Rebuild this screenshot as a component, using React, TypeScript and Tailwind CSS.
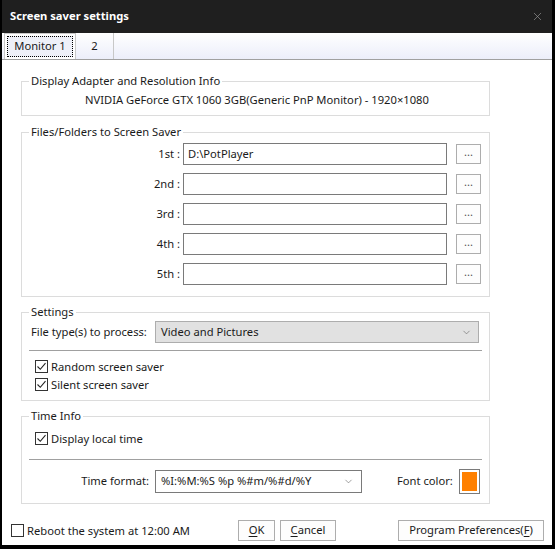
import { ChevronDown, X } from "lucide-react";

const FONT = "font-['Noto_Sans','Liberation_Sans',sans-serif]";
const TXT = "text-[11.2px] text-[#1a1a1a]";

function Check({ on }: { on: boolean }) {
  return (
    <span className="flex h-[13px] w-[13px] shrink-0 items-center justify-center border border-[#333] bg-white">
      {on && (
        <svg width="11" height="11" viewBox="0 0 11 11">
          <path d="M1.5 5.5 L4.3 8.3 L9.5 2.2" fill="none" stroke="#222" strokeWidth="1.1" />
        </svg>
      )}
    </span>
  );
}

function Group({ title, className, children }: { title: string; className: string; children: React.ReactNode }) {
  return (
    <fieldset className={`ml-[19px] w-[469px] border border-[#dcdcdc] ${className}`}>
      <legend className={`ml-[7px] px-[2px] leading-[16px] ${TXT}`}>{title}</legend>
      {children}
    </fieldset>
  );
}

const SLOTS = [
  { label: "1st :", value: "D:\\PotPlayer" },
  { label: "2nd :", value: "" },
  { label: "3rd :", value: "" },
  { label: "4th :", value: "" },
  { label: "5th :", value: "" },
];

function Btn({ children, className }: { children: React.ReactNode; className: string }) {
  return (
    <button className={`flex h-[21px] items-center justify-center border border-[#adadad] bg-[#fdfdfd] ${TXT} ${className}`}>
      {children}
    </button>
  );
}

export default function App() {
  return (
    <div className={`flex h-[549px] w-[555px] flex-col bg-black pb-[4px] pl-[2px] pr-[3px] ${FONT}`}>
      {/* title bar */}
      <div className="flex h-[33px] items-center justify-between bg-[#1f1f1f] pl-[8px] pr-[8px]">
        <span className="text-[11.2px] font-bold text-white">Screen saver settings</span>
        <X size={13} strokeWidth={1.2} className="text-[#9a9a9a]" />
      </div>

      <div className="flex flex-1 flex-col bg-white">
        {/* tabs */}
        <div className="flex h-[27px] border-b border-[#a0a0a0] bg-gradient-to-b from-white to-[#eceefa]">
          <div className="ml-[2px] flex w-[72px] items-stretch border-x border-t border-[#c8c8c8] bg-white p-[2px]">
            <div className={`flex flex-1 items-center justify-center border border-dotted border-black bg-[#eef0f8] ${TXT}`}>
              Monitor 1
            </div>
          </div>
          <div className={`flex w-[38px] items-center justify-center border-r border-[#c8c8c8] ${TXT}`}>
            2
          </div>
        </div>

        <Group title="Display Adapter and Resolution Info" className="mt-[13px] h-[43px]">
          <div className={`pl-[63px] pt-[2px] leading-[18px] ${TXT}`}>
            NVIDIA GeForce GTX 1060 3GB(Generic PnP Monitor) - 1920×1080
          </div>
        </Group>

        <Group title="Files/Folders to Screen Saver" className="mt-[8px] h-[173px]">
          <div className="flex flex-col gap-[8px] pt-[3px]">
            {SLOTS.map((s) => (
              <div key={s.label} className="flex items-center">
                <span className={`w-[158px] text-right ${TXT}`}>{s.label}</span>
                <div className={`ml-[3px] flex h-[22px] w-[264px] items-center border border-[#7a7a7a] px-[4px] ${TXT}`}>
                  {s.value}
                </div>
                <Btn className="ml-[9px] !h-[20px] w-[25px] pb-[4px] !text-[#555]">...</Btn>
              </div>
            ))}
          </div>
        </Group>

        <Group title="Settings" className="mt-[7px] h-[97px]">
          <div className="flex items-center pl-[9px] pt-[1px]">
            <span className={TXT}>File type(s) to process:</span>
            <div className={`ml-auto mr-[10px] flex h-[22px] w-[324px] items-center justify-between border border-[#adadad] bg-[#e1e1e1] pl-[5px] pr-[6px] ${TXT}`}>
              Video and Pictures
              <ChevronDown size={11} strokeWidth={1.2} className="text-[#555]" />
            </div>
          </div>
          <div className="mx-[7px] mt-[7px] h-px bg-[#a0a0a0]" />
          <div className={`flex flex-col gap-[5px] pl-[13px] pt-[9px] ${TXT}`}>
            <label className="flex items-center gap-[3px] leading-[13px]">
              <Check on />
              Random screen saver
            </label>
            <label className="flex items-center gap-[3px] leading-[13px]">
              <Check on />
              Silent screen saver
            </label>
          </div>
        </Group>

        <Group title="Time Info" className="mt-[7px] h-[96px]">
          <label className={`flex items-center gap-[3px] pl-[13px] pt-[8px] leading-[13px] ${TXT}`}>
            <Check on />
            Display local time
          </label>
          <div className="mx-[7px] mt-[14px] h-px bg-[#a0a0a0]" />
          <div className={`flex items-center pt-[9px] ${TXT}`}>
            <span className="w-[127px] text-right">Time format:</span>
            <div className="ml-[6px] flex h-[23px] w-[207px] items-center justify-between border border-[#7a7a7a] pl-[5px] pr-[7px]">
              %I:%M:%S %p %#m/%#d/%Y
              <ChevronDown size={11} strokeWidth={1.2} className="text-[#555]" />
            </div>
            <span className="ml-[35px]">Font color:</span>
            <div className="ml-[6px] h-[25px] w-[21px] border border-[#7a7a7a] bg-white p-[2px]">
              <div className="h-full w-full bg-[#ff8000]" />
            </div>
          </div>
        </Group>

        {/* footer */}
        <div className={`flex flex-1 items-center pl-[9px] pr-[8px] pt-[11px] ${TXT}`}>
          <label className="flex items-center gap-[3px] leading-[13px]">
            <Check on={false} />
            Reboot the system at 12:00 AM
          </label>
          <Btn className="ml-auto w-[37px]">
            <span className="underline underline-offset-2">O</span>K
          </Btn>
          <Btn className="ml-[5px] w-[56px]">
            <span className="underline underline-offset-2">C</span>ancel
          </Btn>
          <Btn className="ml-[62px] w-[146px]">
            Program Preferences(<span className="underline underline-offset-2">F</span>)
          </Btn>
        </div>
      </div>
    </div>
  );
}
